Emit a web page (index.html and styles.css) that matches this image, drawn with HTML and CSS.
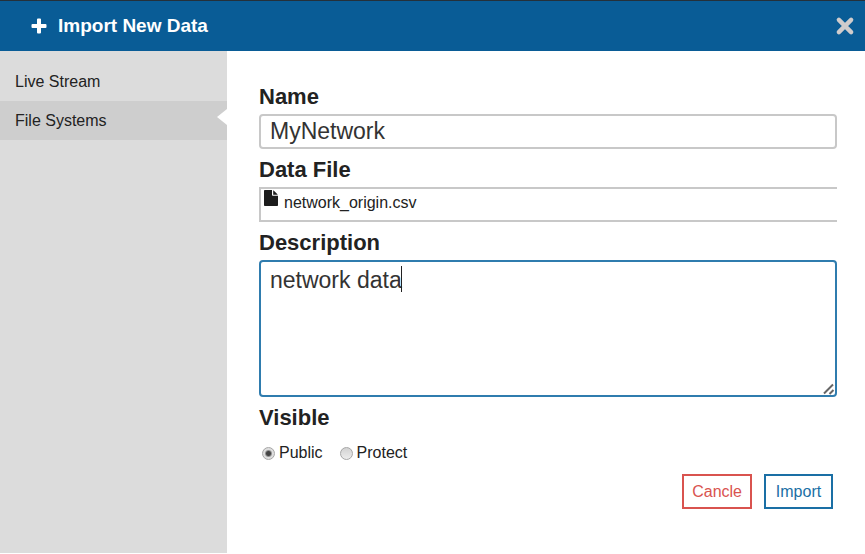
FILE: index.html
```html
<!DOCTYPE html>
<html lang="en">
<head>
<meta charset="utf-8">
<meta name="viewport" content="width=device-width, initial-scale=1">
<title>Import New Data</title>
<link rel="stylesheet" href="styles.css">
</head>
<body>
<header class="header">
  <svg class="header-plus" viewBox="0 0 16 16" aria-hidden="true"><path d="M7 .5h2q1 0 1 1V6h4.500q1 0 1 1v2q0 1-1 1H10v4.500q0 1-1 1H7q-1 0-1-1V10H1.500q-1 0-1-1V7q0-1 1-1H6V1.500q0-1 1-1z"/></svg>
  <h1 class="title">Import New Data</h1>
  <button class="close" type="button" aria-label="Close">
    <svg viewBox="0 0 18 18" aria-hidden="true"><path d="M3.500 3.500l11 11M14.500 3.500l-11 11"/></svg>
  </button>
</header>
<div class="layout">
  <nav class="sidebar">
    <a class="nav-link" href="#live">Live Stream</a>
    <a class="nav-link active" href="#files" aria-current="page">File Systems</a>
  </nav>
  <main class="content">
    <form>
      <div class="field">
        <label class="label" for="name">Name</label>
        <input class="input" id="name" type="text" value="MyNetwork">
      </div>
      <div class="field">
        <h2 class="label">Data File</h2>
        <div class="file">
          <svg class="file-icon" viewBox="0 0 14 16" aria-hidden="true"><path d="M.8 0H8v5q0 .8.8.8H14v9.400q0 .8-.8.800H.8q-.8 0-.8-.8V.8Q0 0 .8 0z"/><path d="M9.200.2q.4.200.7.500l3.300 3.200q.4.400.5.800H9.200z"/></svg>
          <span>network_origin.csv</span>
        </div>
      </div>
      <div class="field">
        <label class="label" for="description">Description</label>
        <div class="area-wrap">
          <textarea class="input area" id="description">network data</textarea>
          <span class="caret"></span>
          <svg class="grip" viewBox="0 0 12 12" aria-hidden="true"><path d="M1 10.500L10 1.500M6.500 11L10.500 7"/></svg>
        </div>
      </div>
      <fieldset class="visible">
        <legend class="label">Visible</legend>
        <div class="radios">
          <label class="choice"><input class="radio" type="radio" name="visible" checked>Public</label>
          <label class="choice"><input class="radio" type="radio" name="visible">Protect</label>
        </div>
      </fieldset>
      <div class="actions">
        <button class="btn cancel" type="button">Cancle</button>
        <button class="btn import" type="submit">Import</button>
      </div>
    </form>
  </main>
</div>
</body>
</html>
```

FILE: styles.css
```css
* {
  box-sizing: border-box;
}

body {
  margin: 0;
  min-height: 100vh;
  display: flex;
  flex-direction: column;
  background: #fff;
  color: #222;
  font: 16px/20px "Liberation Sans", Arial, sans-serif;
}

.header {
  display: flex;
  align-items: center;
  height: 51px;
  padding: 0 10px 0 31px;
  border-top: 1px solid #24303a;
  background: #095c96;
  color: #fff;
}

.header-plus {
  width: 16px;
  height: 16px;
  margin-right: 11px;
  fill: #fff;
}

.title {
  margin: 0;
  font-size: 19px;
  line-height: 24px;
}

.close {
  display: flex;
  margin-left: auto;
  padding: 0;
  border: 0;
  background: none;
}

.close svg {
  width: 20px;
  height: 20px;
  fill: none;
  stroke: #d0cccc;
  stroke-width: 4;
  stroke-linecap: round;
}

.layout {
  flex: 1;
  display: flex;
  margin-bottom: 1px;
}

.sidebar {
  flex: none;
  width: 227px;
  padding-top: 11px;
  background: #dcdcdc;
}

.nav-link {
  position: relative;
  display: block;
  padding: 10px 15px 9px;
  color: #222;
  text-decoration: none;
}

.active {
  background: #cecece;
}

.active::after {
  content: "";
  position: absolute;
  right: 0;
  top: 8px;
  border: solid transparent;
  border-width: 8px 10px 8px 0;
  border-right-color: #fff;
}

.content {
  flex: 1;
  padding: 32px 28px 20px 32px;
}

.field {
  margin-bottom: 7px;
}

.label {
  display: block;
  margin: 0 0 3px;
  padding: 0;
  font-size: 22px;
  font-weight: bold;
  line-height: 28px;
}

.input {
  display: block;
  width: 100%;
  height: 35px;
  margin: 0;
  padding: 0 9px;
  border: 2px solid #c8c8c8;
  border-radius: 4px;
  outline: 0;
  background: #fff;
  color: #333;
  font: 23px/28px "Liberation Sans", Arial, sans-serif;
}

.file {
  display: flex;
  align-items: flex-start;
  gap: 6px;
  height: 35px;
  padding: 1px 3px;
  border: 2px solid #c8c8c8;
  border-right: 0;
}

.file span {
  padding-top: 3px;
}

.file-icon {
  width: 14px;
  height: 16px;
  fill: #1c1c1c;
}

.area-wrap {
  position: relative;
}

.area {
  height: 137px;
  padding-top: 4px;
  border-color: #2f7cae;
  resize: none;
}

.caret {
  position: absolute;
  left: 142px;
  top: 6px;
  width: 1px;
  height: 26px;
  background: #222;
}

.grip {
  position: absolute;
  right: 2px;
  bottom: 2px;
  width: 12px;
  height: 12px;
  fill: none;
  stroke: #666;
  stroke-width: 2;
  pointer-events: none;
}

.visible {
  margin: 0;
  padding: 0;
  border: 0;
}

.radios {
  display: flex;
  gap: 17px;
  padding: 8px 0 0 3px;
}

.choice {
  display: flex;
  align-items: center;
  gap: 4px;
}

.radio {
  appearance: none;
  width: 13px;
  height: 13px;
  margin: 0;
  border: 1px solid #a6a6a6;
  border-radius: 50%;
  background: linear-gradient(#d2d2d2, #ededed);
}

.radio:checked {
  background: radial-gradient(circle, #444 0 2px, #dedede 4px);
}

.actions {
  display: flex;
  justify-content: flex-end;
  gap: 12px;
  margin-top: 11px;
  padding-right: 4px;
}

.btn {
  min-width: 69px;
  height: 35px;
  padding: 0 8px;
  border: 2px solid;
  background: #fff;
  font: 16px/20px "Liberation Sans", Arial, sans-serif;
}

.cancel {
  color: #d9534f;
}

.import {
  color: #1a6fa5;
}
```
